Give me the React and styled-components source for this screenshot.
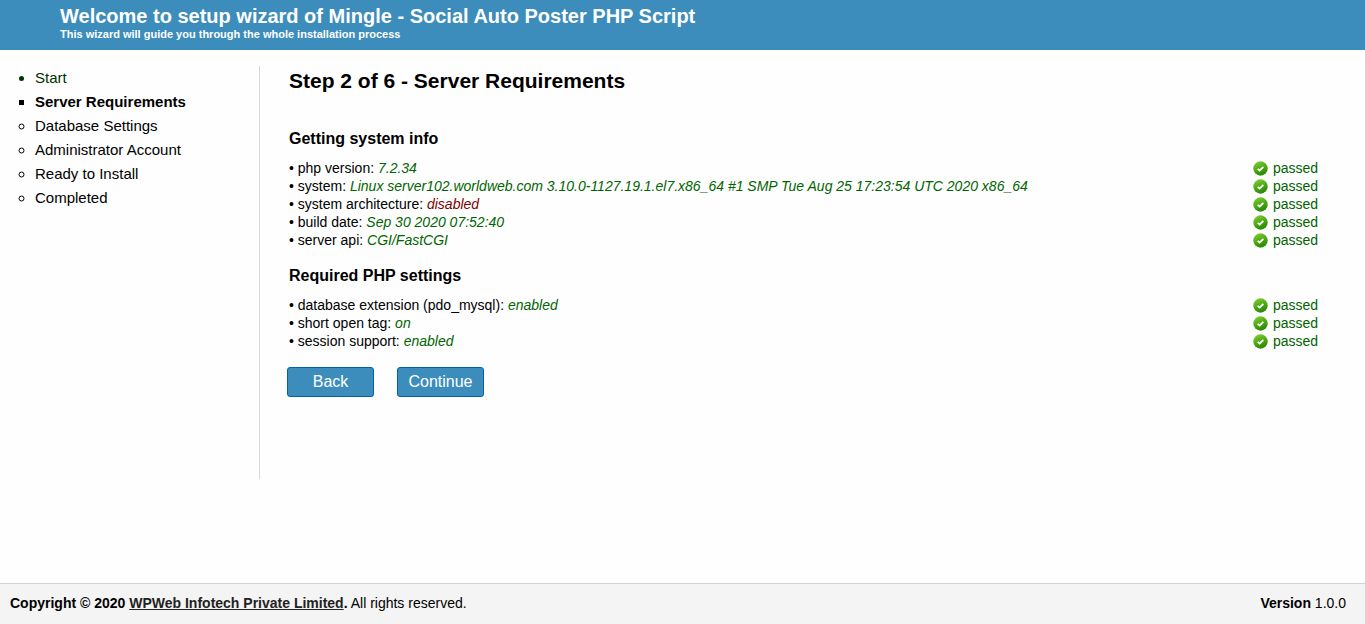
import styled, { createGlobalStyle, css } from 'styled-components';

const steps = [
  { name: 'Start', state: 'done' },
  { name: 'Server Requirements', state: 'current' },
  { name: 'Database Settings', state: 'next' },
  { name: 'Administrator Account', state: 'next' },
  { name: 'Ready to Install', state: 'next' },
  { name: 'Completed', state: 'next' },
];

const sections = [
  {
    title: 'Getting system info',
    rows: [
      { label: 'php version', value: '7.2.34' },
      {
        label: 'system',
        value: 'Linux server102.worldweb.com 3.10.0-1127.19.1.el7.x86_64 #1 SMP Tue Aug 25 17:23:54 UTC 2020 x86_64',
      },
      { label: 'system architecture', value: 'disabled', off: true },
      { label: 'build date', value: 'Sep 30 2020 07:52:40' },
      { label: 'server api', value: 'CGI/FastCGI' },
    ],
  },
  {
    title: 'Required PHP settings',
    rows: [
      { label: 'database extension (pdo_mysql)', value: 'enabled' },
      { label: 'short open tag', value: 'on' },
      { label: 'session support', value: 'enabled' },
    ],
  },
];

function IconPassed() {
  return (
    <Icon viewBox="0 0 16 16" aria-hidden="true">
      <defs>
        <linearGradient id="passed" x1="0" y1="0" x2="0.4" y2="1">
          <stop offset="0" stopColor="#8bd23a" />
          <stop offset="0.5" stopColor="#55b018" />
          <stop offset="1" stopColor="#2c8a06" />
        </linearGradient>
      </defs>
      <circle cx="8" cy="8" r="7.7" fill="url(#passed)" />
      <path d="M5 8.4 L7.1 10.2 L11 6.2" fill="none" stroke="#fff" strokeWidth="2" />
    </Icon>
  );
}

export default function App() {
  return (
    <>
      <GlobalStyle />
      <Page>
        <Header>
          <Title>Welcome to setup wizard of Mingle - Social Auto Poster PHP Script</Title>
          <SubTitle>This wizard will guide you through the whole installation process</SubTitle>
        </Header>
        <Main>
          <Sidebar>
            <Steps>
              {steps.map(step => (
                <Step key={step.name} $state={step.state}>
                  {step.state === 'done' ? <StepLink href="#start">{step.name}</StepLink> : step.name}
                </Step>
              ))}
            </Steps>
          </Sidebar>
          <Content>
            <H2>Step 2 of 6 - Server Requirements</H2>
            {sections.map(section => (
              <section key={section.title}>
                <H3>{section.title}</H3>
                <Table>
                  <tbody>
                    {section.rows.map(row => (
                      <tr key={row.label}>
                        <Cell>
                          • {row.label}: <Value $off={row.off}>{row.value}</Value>
                        </Cell>
                        <StatusCell>
                          <Status>
                            <IconPassed />
                            passed
                          </Status>
                        </StatusCell>
                      </tr>
                    ))}
                  </tbody>
                </Table>
              </section>
            ))}
            <Buttons>
              <Button type="button">Back</Button>
              <Button type="button">Continue</Button>
            </Buttons>
          </Content>
        </Main>
        <Footer>
          <div>
            <strong>
              Copyright © 2020 <FooterLink href="#company">WPWeb Infotech Private Limited</FooterLink>.
            </strong>{' '}
            All rights reserved.
          </div>
          <div>
            <strong>Version</strong> 1.0.0
          </div>
        </Footer>
      </Page>
    </>
  );
}

const GlobalStyle = createGlobalStyle`
  * {
    box-sizing: border-box;
  }

  body {
    margin: 0;
    background: #fefefe;
    color: #000;
    font-family: "Liberation Sans", Arial, Helvetica, sans-serif;
    font-size: 14px;
    line-height: 18px;
  }
`;

const Page = styled.div`
  display: flex;
  flex-direction: column;
  min-height: 100vh;
`;

const Header = styled.header`
  padding: 4px 60px 10px;
  background: #3c8dbc;
  color: #fff;
`;

const Title = styled.h1`
  margin: 0;
  font-size: 20px;
  line-height: 24px;
`;

const SubTitle = styled.p`
  margin: 0;
  font-size: 11px;
  font-weight: bold;
  line-height: 12px;
`;

const Main = styled.main`
  display: flex;
  flex: 1;
  align-items: flex-start;
  padding: 16px 20px 16px 0;
`;

const Sidebar = styled.nav`
  flex: 0 0 260px;
  min-height: 413px;
  border-right: 1px solid #d9d9d9;
`;

const Steps = styled.ul`
  margin: 0;
  padding: 0 0 0 35px;
`;

const markers = {
  done: 'disc',
  current: 'square',
  next: 'circle',
};

const Step = styled.li`
  font-size: 15px;
  line-height: 24px;
  list-style-type: ${props => markers[props.$state]};
  ${props => props.$state === 'done' && css`
    color: #003300;
  `}
  ${props => props.$state === 'current' && css`
    font-weight: bold;
  `}
`;

const StepLink = styled.a`
  color: inherit;
  text-decoration: none;
`;

const Content = styled.div`
  flex: 1;
  min-width: 0;
  padding-left: 27px;
`;

const H2 = styled.h2`
  margin: 0 0 33px;
  padding-left: 2px;
  font-size: 21px;
  line-height: 30px;
`;

const H3 = styled.h3`
  margin: 0 0 10px;
  padding-left: 2px;
  font-size: 16px;
  line-height: 20px;
`;

const Table = styled.table`
  width: 100%;
  margin-bottom: 17px;
  border-collapse: collapse;
`;

const Cell = styled.td`
  padding: 0 0 0 2px;
`;

const Value = styled.i`
  color: ${props => props.$off ? '#800000' : '#006400'};
`;

const StatusCell = styled.td`
  width: 92px;
  padding: 0;
  color: #006400;
`;

const Status = styled.span`
  display: flex;
  align-items: center;
  gap: 5px;
`;

const Icon = styled.svg`
  width: 15px;
  height: 15px;
`;

const Buttons = styled.div`
  display: flex;
  gap: 23px;
`;

const Button = styled.button`
  width: 87px;
  height: 30px;
  padding: 0;
  border: 1px solid #0062a8;
  border-radius: 3px;
  background: #3c8dbc;
  color: #fff;
  font-family: inherit;
  font-size: 16px;
  cursor: pointer;
`;

const Footer = styled.footer`
  display: flex;
  justify-content: space-between;
  padding: 10px 19px 12px 10px;
  border-top: 1px solid #d2d2d2;
  background: #f4f4f4;
`;

const FooterLink = styled.a`
  color: #222;
`;
